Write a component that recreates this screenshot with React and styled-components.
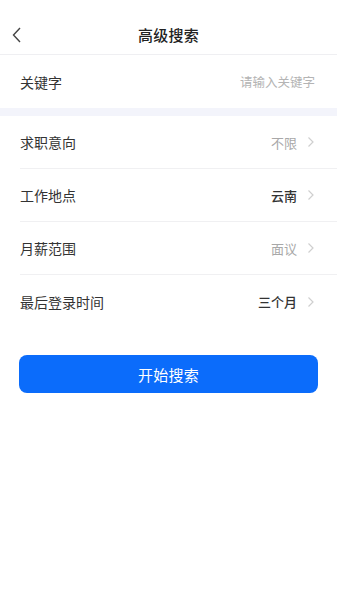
import React from "react";
import styled, { createGlobalStyle } from "styled-components";

const Global = createGlobalStyle`
  html, body { margin: 0; padding: 0; background: #fff; }
  body { font-family: "Noto Sans CJK SC", "Noto Sans", sans-serif; }
  * { box-sizing: border-box; }
`;

const Page = styled.div`
  width: 337px;
  min-height: 600px;
  background: #fff;
  display: flex;
  flex-direction: column;
`;

const Header = styled.div`
  height: 55px;
  display: flex;
  align-items: center;
  justify-content: center;
  position: relative;
  border-bottom: 1px solid #efeff2;
  padding-top: 14px;
`;

const Back = styled.button`
  position: absolute;
  left: 9px;
  top: 24px;
  width: 16px;
  height: 22px;
  border: none;
  background: none;
  padding: 0;
  display: flex;
  align-items: center;
  justify-content: center;
`;

const Title = styled.h1`
  margin: 0;
  font-size: 15px;
  font-weight: 500;
  color: #222;
  letter-spacing: 0.3px;
`;

const Row = styled.div`
  height: 53px;
  margin-left: 20px;
  padding-right: 22px;
  display: flex;
  align-items: center;
  justify-content: space-between;
  border-bottom: ${(p) => (p.last ? "none" : "1px solid #f0f0f2")};
`;

const Label = styled.span`
  font-size: 14px;
  color: #333;
`;

const Input = styled.input`
  border: none;
  outline: none;
  text-align: right;
  font-family: inherit;
  font-size: 12.5px;
  color: #333;
  width: 140px;
  padding: 0;
  &::placeholder { color: #b4b4b4; }
`;

const Band = styled.div`
  height: 8px;
  background: #f3f4fb;
`;

const Value = styled.span`
  font-size: 13px;
  color: ${(p) => (p.set ? "#333" : "#a8a8a8")};
  font-weight: ${(p) => (p.set ? 500 : 400)};
`;

const Right = styled.div`
  display: flex;
  align-items: center;
  gap: 10px;
`;

const ButtonWrap = styled.div`
  padding: 27px 19px 0;
`;

const SearchButton = styled.button`
  width: 100%;
  height: 38px;
  border: none;
  border-radius: 8px;
  background: #0b6cfb;
  color: #fff;
  font-family: inherit;
  font-size: 15px;
  letter-spacing: 0.3px;
`;

const Chevron = () => (
  <svg width="8" height="12" viewBox="0 0 8 12">
    <path d="M1.5 1.5 L6 6 L1.5 10.5" fill="none" stroke="#cfcfcf" strokeWidth="1.2" />
  </svg>
);

const items = [
  { label: "求职意向", value: "不限", set: false },
  { label: "工作地点", value: "云南", set: true },
  { label: "月薪范围", value: "面议", set: false },
  { label: "最后登录时间", value: "三个月", set: true },
];

export default function App() {
  return (
    <Page>
      <Global />
      <Header>
        <Back>
          <svg width="10" height="16" viewBox="0 0 10 16">
            <path d="M8 1 L1.5 8 L8 15" fill="none" stroke="#444" strokeWidth="1.4" />
          </svg>
        </Back>
        <Title>高级搜索</Title>
      </Header>
      <Row last>
        <Label>关键字</Label>
        <Input placeholder="请输入关键字" />
      </Row>
      <Band />
      {items.map((it, i) => (
        <Row key={it.label} last={i === items.length - 1}>
          <Label>{it.label}</Label>
          <Right>
            <Value set={it.set}>{it.value}</Value>
            <Chevron />
          </Right>
        </Row>
      ))}
      <ButtonWrap>
        <SearchButton>开始搜索</SearchButton>
      </ButtonWrap>
    </Page>
  );
}
